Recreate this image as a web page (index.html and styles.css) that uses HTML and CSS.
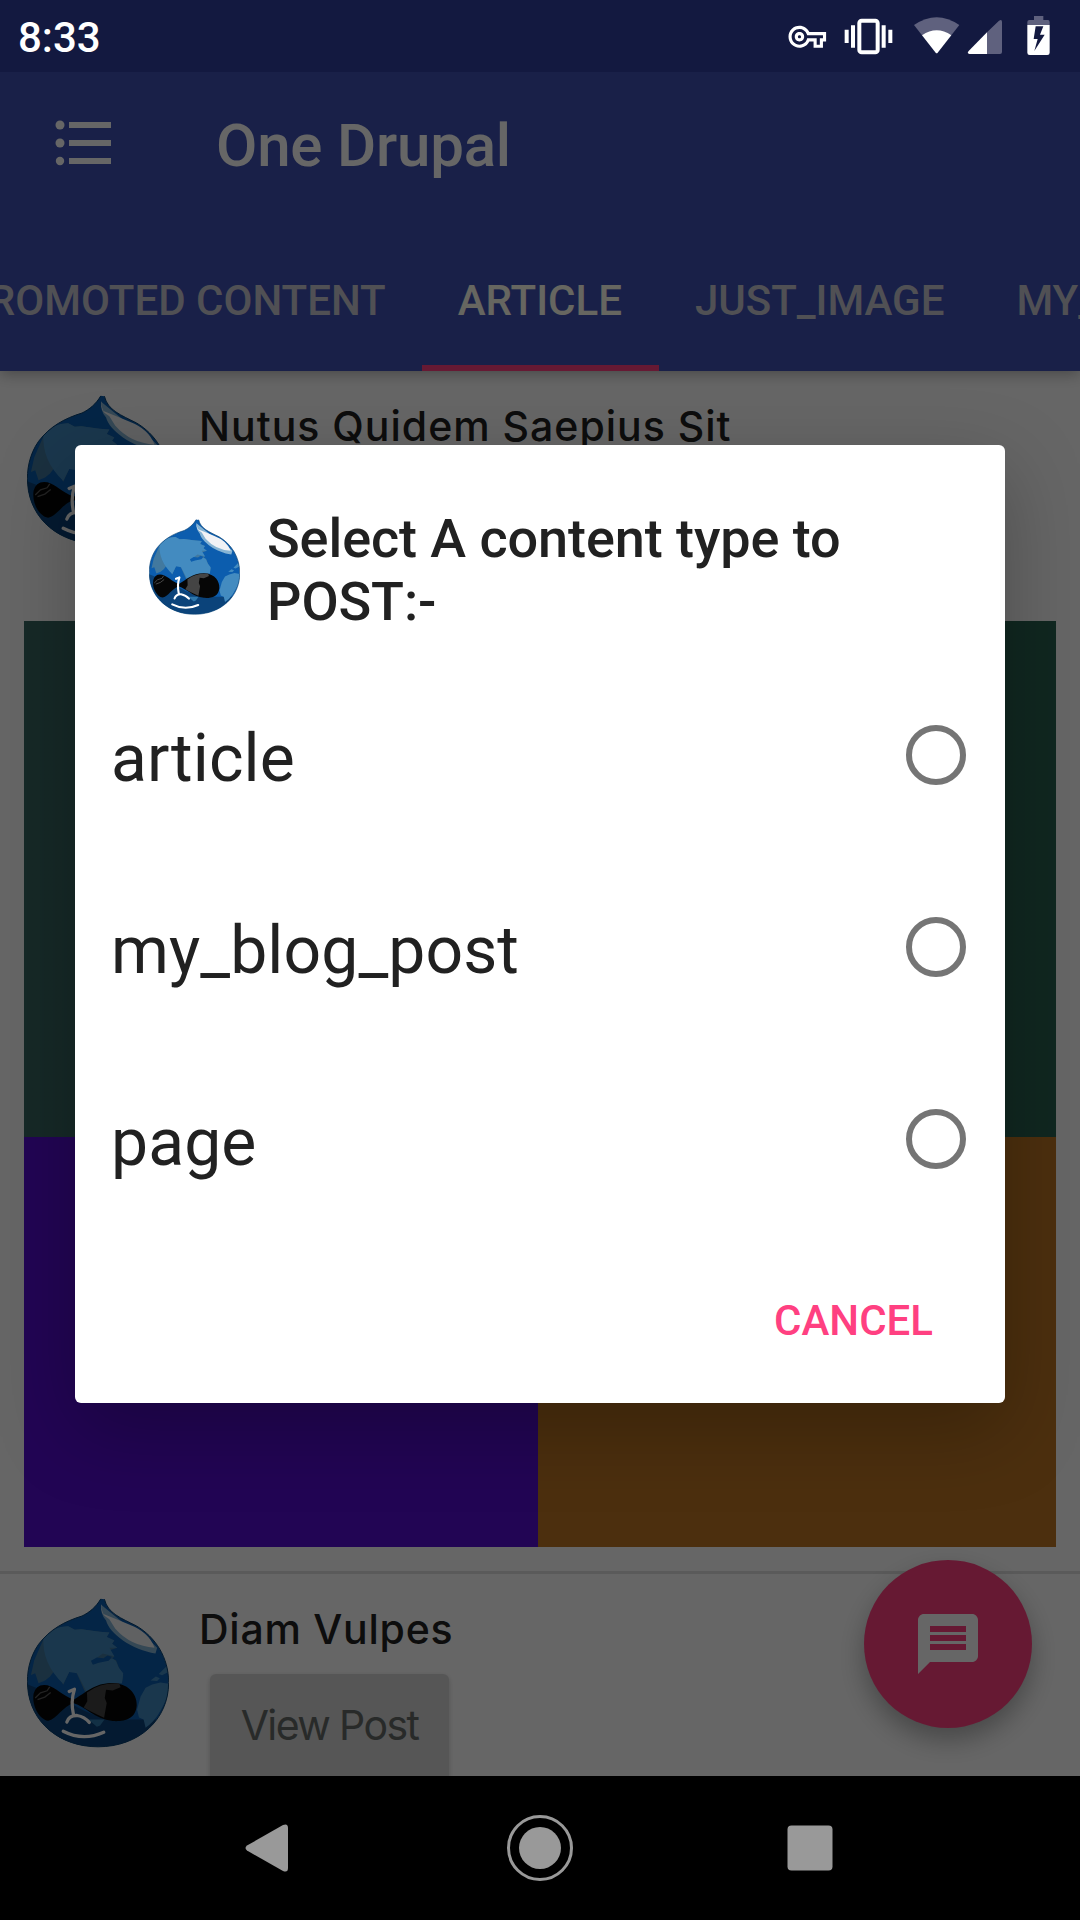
FILE: index.html
```html
<!DOCTYPE html>
<html lang="en">
<head>
<meta charset="utf-8">
<title>One Drupal</title>
<link rel="stylesheet" href="styles.css">
</head>
<body>
<svg class="defs" width="0" height="0" aria-hidden="true">
  <symbol id="drop" viewBox="80 113 431 452">
    <clipPath id="body"><path d="M304 114C290 138 270 155 247 166C195 182 150 206 115 252C88 290 78 340 82 382C90 490 180 563 296 563C420 563 510 480 510 368C510 292 470 230 412 196C365 172 325 158 315 115Z"/></clipPath>
    <g clip-path="url(#body)">
      <path fill="#0c5dae" d="M70 100H520V570H70Z"/>
      <path fill="#0b437a" d="M70 370Q130 390 220 435Q300 485 400 480H520V570H70Z"/>
      <path fill="#42799f" d="M132 232Q170 198 205 197L225 208L245 206L300 214L330 216L322 230L345 240L338 250L354 262L330 270L345 290L310 312L280 308L275 318L330 292L350 300L360 325L372 345L368 370Q330 365 285 385L260 405L240 360L228 333L208 336L190 375L165 330L150 350L135 362L115 370L105 340L92 345L102 300Z"/>
      <path fill="#438bc0" d="M130 232Q160 196 205 197L225 208L245 206L300 214L330 216L322 230L345 240L338 250L354 262L330 262L345 288L310 280L275 305L280 312L340 295L350 303L358 322L372 340L368 370Q330 365 285 385L262 398L232 340L208 336L190 372Q125 310 130 232Z"/>
      <path fill="#0c5dae" d="M274 302l18-10 20 2 12-8 14 4-10 12-30 6-18 6z"/>
      <path fill="#438bc0" d="M502 320L480 342L490 346L510 335V372L485 368L460 374L440 384L425 410L414 450L420 474L434 480L440 505Q480 480 510 400V320ZM455 362l16-12 12 5-8 8z"/>
      <path fill="#2f78ad" d="M265 480H315L302 498L292 502L278 490Z"/>
      <path fill="#060606" d="M100 402Q108 370 142 376C170 384 185 405 221 420C260 398 285 368 342 369C395 372 415 410 413 438C410 480 375 487 340 485C285 478 255 440 222 431C190 438 170 480 144 484C118 480 94 440 100 402Z"/>
      <path fill="#444" d="M262 398Q300 368 360 370L364 382L340 392L320 390L316 415L322 430L314 475Q275 458 252 444L263 425Z"/>
      <path fill="none" stroke="#555" stroke-width="4" d="M105 415l16-16 20-6 8-12M112 420l22-8 18-14"/>
      <path fill="#86b4d4" d="M305 132Q302 160 320 180C330 220 400 270 470 280L475 262Q430 215 370 185Z"/>
      <path fill="#f1f2f5" d="M311 114Q302 145 312 160Q350 175 390 192Q450 215 467 262Q395 258 348 205L330 176L315 165Q304 155 306 135Z"/>
      <path fill="none" stroke="#fff" stroke-width="10" stroke-linecap="round" stroke-linejoin="round" d="M208 395L224 388Q212 425 221 465M201 488Q208 467 232 468Q255 472 269 489M190 516Q250 547 313 519"/>
    </g>
    <path fill="none" stroke="#08406f" stroke-width="3" d="M304 114C290 138 270 155 247 166C195 182 150 206 115 252C88 290 78 340 82 382C90 490 180 563 296 563C420 563 510 480 510 368C510 292 470 230 412 196C365 172 325 158 315 115"/>
  </symbol>
</svg>

<div class="screen">
  <header class="status">
    <span>8:33</span>
    <svg class="status-icons" width="320" height="72" viewBox="0 0 960 216">
      <path fill="#fff" transform="translate(85.500 54) scale(4.700)" d="M22 19h-6v-4h-2.700c-1.100 2.400-3.600 4-6.300 4c-3.900 0-7-3.100-7-7s3.100-7 7-7c2.700 0 5.200 1.600 6.300 4H24v6h-2V19zM18 17h2v-4h2v-2H11.900l-.2-.7C11 8.300 9.100 7 7 7c-2.800 0-5 2.200-5 5s2.200 5 5 5c2.100 0 4-1.300 4.700-3.300l.2-.7H18V17zM7 15c-1.700 0-3-1.300-3-3s1.300-3 3-3s3 1.300 3 3S8.700 15 7 15zM7 11c-.6 0-1 .4-1 1s.4 1 1 1s1-.4 1-1S7.600 11 7 11z"/>
      <g fill="none" stroke="#fff">
        <rect x="298" y="62" width="55" height="95" rx="7" stroke-width="12"/>
        <path stroke-width="12" d="M279 76V143M260 89V129M371 76V143M391 89V129"/>
      </g>
      <path fill="#5f617e" d="M462 75Q530 28 598 75L574 106H486Z"/>
      <path fill="#fff" d="M486 106Q530 76 574 106L533 158Q530 161 527 158Z"/>
      <path fill="#5f617e" d="M681 97L717 62Q726 56 726 66V156Q726 162 720 162H681ZM822 48H850V60H864Q869 60 869 66V75H802V66Q802 60 808 60H822Z"/>
      <path fill="#fff" d="M681 97V162H628Q620 160 626 153Z"/>
      <path fill="#fff" fill-rule="evenodd" d="M802 75H869V158Q869 165 862 165H809Q802 165 802 158ZM827 79L821 117H833L823 153L854 104H840L850 79Z"/>
    </svg>
  </header>

  <main class="app">
    <div class="appbar">
      <div class="toolbar">
        <svg width="56" height="48" viewBox="0 0 56 48" fill="#fff"><circle cx="5" cy="6" r="4.5"/><circle cx="5" cy="24" r="4.5"/><circle cx="5" cy="42" r="4.2"/><path d="M14 3h42v6H14zM14 21h42v6H14zM14 39h42v6H14z"/></svg>
        <h1>One Drupal</h1>
      </div>
      <nav class="tabs">
        <span class="tab">PROMOTED CONTENT</span>
        <span class="tab active">ARTICLE</span>
        <span class="tab">JUST_IMAGE</span>
        <span class="tab">MY_BLOG_POST</span>
      </nav>
    </div>
    <article class="post first">
      <div class="post-head">
        <svg class="avatar"><use href="#drop"/></svg>
        <h2>Nutus Quidem Saepius Sit</h2>
      </div>
      <div class="picture"><i class="green"></i><i class="purple"></i><i class="orange"></i></div>
    </article>
    <article class="post">
      <div class="post-head">
        <svg class="avatar"><use href="#drop"/></svg>
        <div>
          <h2>Diam Vulpes</h2>
          <button class="view">View Post</button>
        </div>
      </div>
    </article>
    <div class="fab"><svg width="72" height="72" viewBox="0 0 24 24" fill="#fff"><path d="M20 2H4c-1.100 0-2 .9-2 2v18l4-4h14c1.100 0 2-.9 2-2V4c0-1.100-.9-2-2-2zM18 14H6v-2h12v2zm0-3H6V9h12v2zm0-3H6V6h12v2z"/></svg></div>
    <div class="scrim"></div>
    <section class="dialog">
      <div class="dialog-title">
        <svg class="logo"><use href="#drop"/></svg>
        <h3>Select A content type to POST:-</h3>
      </div>
      <div class="option"><span>article</span><i class="radio"></i></div>
      <div class="option"><span>my_blog_post</span><i class="radio"></i></div>
      <div class="option"><span>page</span><i class="radio"></i></div>
      <div class="actions"><span>CANCEL</span></div>
    </section>
  </main>

  <footer class="navbar">
    <svg width="660" height="144" viewBox="210 1776 660 144" fill="#999">
      <path d="M247 1845.500L283 1825Q288 1823 288 1828V1868Q288 1873 283 1871L247 1850.500Q244 1848 247 1845.500Z"/>
      <circle cx="540" cy="1848" r="31.500" fill="none" stroke="#999" stroke-width="3"/>
      <circle cx="540" cy="1848" r="21"/>
      <rect x="787.500" y="1825.500" width="45" height="45" rx="4"/>
    </svg>
  </footer>
</div>
</body>
</html>
```
FILE: styles.css
```css
* { box-sizing: border-box; }
body { margin: 0; font-family: Roboto, sans-serif; }
h1, h2, h3 { margin: 0; }
svg { display: block; flex: none; }
.defs { position: absolute; }
.screen { width: 1080px; height: 1920px; display: flex; flex-direction: column; overflow: hidden; }

.status { height: 72px; flex: none; background: #131940; color: #fff; display: flex; align-items: center; justify-content: space-between; padding-left: 18px; font-size: 42px; font-weight: 500; line-height: 72px; }
.status span { padding-top: 3px; }

.app { position: relative; height: 1704px; flex: none; overflow: hidden; background: #fff; }
.appbar { position: relative; height: 299px; background: #3f51b5; color: #fff; box-shadow: 0 3px 14px rgba(0, 0, 0, .3); }
.toolbar { height: 155px; display: flex; align-items: flex-start; padding: 47px 0 0 55px; gap: 105px; }
.toolbar h1 { font-size: 60px; font-weight: 500; line-height: 70px; margin-top: -8px; letter-spacing: -.2px; }
.tabs { height: 144px; display: flex; justify-content: flex-start; margin-left: -74px; font-size: 42px; font-weight: 500; }
.tab { flex: none; padding: 0 36px; line-height: 148px; color: #c8c8d2; white-space: nowrap; }
.tab.active { padding-right: 37px; color: #fffef0; border-bottom: 6px solid #ff4081; }

.post { padding: 24px 24px 0; }
.post.first { height: 1203px; border-bottom: 3px solid #e0e0e0; }
.post-head { display: flex; gap: 29px; padding-left: 3px; }
.first .post-head { height: 226px; }
.avatar { width: 142px; height: 150px; margin-right: 1px; }
.post h2 { font: 500 41px/50px Inter, sans-serif; letter-spacing: .75px; color: #212121; margin-top: 6px; white-space: nowrap; }
.post.first h2 { letter-spacing: 1px; }
.view { display: block; width: 239px; height: 144px; margin: 20px 0 0 11px; padding: 0 0 42px; border: 0; border-radius: 6px; background: #d6d6d6; color: #646a68; font: 400 41px Inter, sans-serif; letter-spacing: -1.600px; box-shadow: 0 2px 5px rgba(0, 0, 0, .2); }
.picture { height: 926px; display: grid; grid-template: 516px 410px / 514px 518px; }
.green { grid-column: 1 / 3; background: linear-gradient(90deg, #396662, #286350); }
.purple { background: #550dd2; }
.orange { background: #be7524; }

.fab { position: absolute; right: 48px; bottom: 48px; width: 168px; height: 168px; border-radius: 50%; background: #ff4081; display: flex; align-items: center; justify-content: center; box-shadow: 0 12px 26px rgba(0, 0, 0, .3); }
.scrim { position: absolute; inset: 0; background: rgba(0, 0, 0, .6); }
.dialog { position: absolute; left: 75px; top: 373px; width: 930px; height: 958px; border-radius: 6px; background: #fff; color: #212121; box-shadow: 0 26px 80px rgba(0, 0, 0, .25); }
.dialog-title { height: 214px; display: flex; gap: 27px; padding: 62px 72px 0 74px; }
.logo { width: 91px; height: 96px; margin-top: 12px; }
.dialog-title h3 { font-size: 54px; font-weight: 500; line-height: 63px; letter-spacing: -.08px; }
.option { height: 192px; display: flex; align-items: center; justify-content: space-between; padding: 0 39px 0 36px; font-size: 66px; }
.option span { padding-top: 6px; letter-spacing: .1px; }
.radio { width: 60px; height: 60px; border: 6px solid #757575; border-radius: 50%; }
.actions { display: flex; justify-content: flex-end; padding: 61px 72px 0; color: #ff4081; font-size: 42px; font-weight: 500; line-height: 50px; }

.navbar { height: 144px; flex: none; background: #000; display: flex; justify-content: center; }
```
